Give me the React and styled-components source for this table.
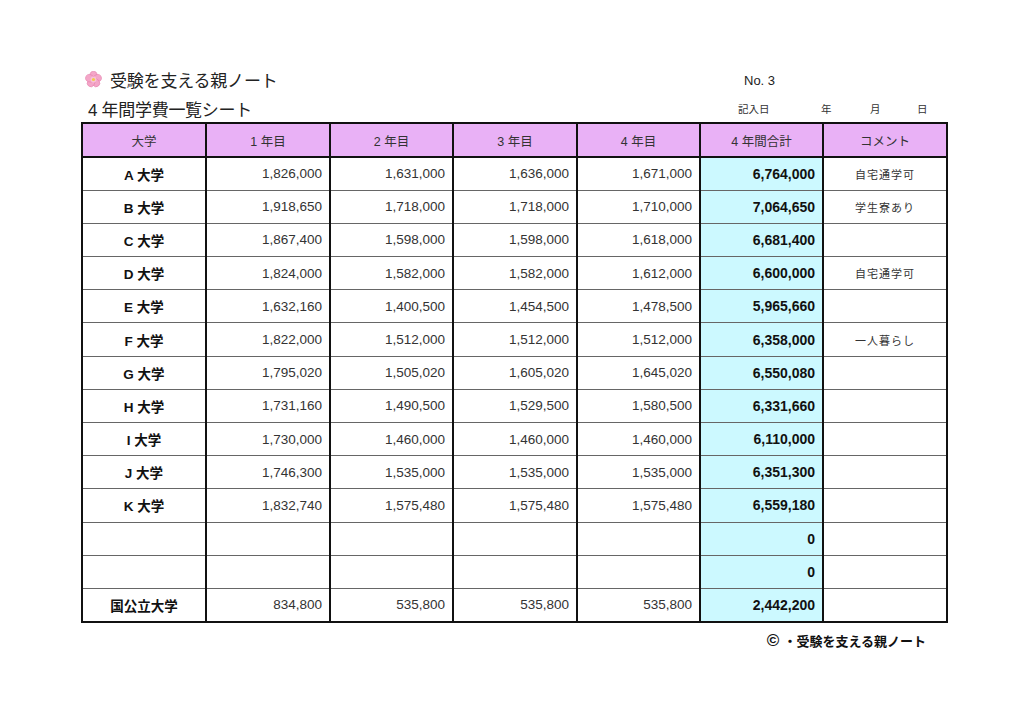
import React from 'react'
import styled, { createGlobalStyle } from 'styled-components'

const GlobalStyle = createGlobalStyle`
  html, body {
    margin: 0;
    padding: 0;
    background: #ffffff;
  }
  body {
    font-family: "Liberation Sans", "Noto Sans CJK JP", sans-serif;
    color: #222;
  }
`

const rows = [
  { name: 'A 大学', y: ['1,826,000', '1,631,000', '1,636,000', '1,671,000'], total: '6,764,000', note: '自宅通学可' },
  { name: 'B 大学', y: ['1,918,650', '1,718,000', '1,718,000', '1,710,000'], total: '7,064,650', note: '学生寮あり' },
  { name: 'C 大学', y: ['1,867,400', '1,598,000', '1,598,000', '1,618,000'], total: '6,681,400', note: '' },
  { name: 'D 大学', y: ['1,824,000', '1,582,000', '1,582,000', '1,612,000'], total: '6,600,000', note: '自宅通学可' },
  { name: 'E 大学', y: ['1,632,160', '1,400,500', '1,454,500', '1,478,500'], total: '5,965,660', note: '' },
  { name: 'F 大学', y: ['1,822,000', '1,512,000', '1,512,000', '1,512,000'], total: '6,358,000', note: '一人暮らし' },
  { name: 'G 大学', y: ['1,795,020', '1,505,020', '1,605,020', '1,645,020'], total: '6,550,080', note: '' },
  { name: 'H 大学', y: ['1,731,160', '1,490,500', '1,529,500', '1,580,500'], total: '6,331,660', note: '' },
  { name: 'I 大学', y: ['1,730,000', '1,460,000', '1,460,000', '1,460,000'], total: '6,110,000', note: '' },
  { name: 'J 大学', y: ['1,746,300', '1,535,000', '1,535,000', '1,535,000'], total: '6,351,300', note: '' },
  { name: 'K 大学', y: ['1,832,740', '1,575,480', '1,575,480', '1,575,480'], total: '6,559,180', note: '' },
  { name: '', y: ['', '', '', ''], total: '0', note: '' },
  { name: '', y: ['', '', '', ''], total: '0', note: '' },
  { name: '国公立大学', y: ['834,800', '535,800', '535,800', '535,800'], total: '2,442,200', note: '' },
]

const headers = ['大学', '1 年目', '2 年目', '3 年目', '4 年目', '4 年間合計', 'コメント']

function Flower() {
  const petals = [0, 72, 144, 216, 288]
  return (
    <svg width="17" height="17" viewBox="0 0 20 20">
      {petals.map((a) => (
        <ellipse key={a} cx="10" cy="5.2" rx="4.3" ry="4.8" fill="#f4a6c8" stroke="#e27aa8" strokeWidth="0.6" transform={`rotate(${a} 10 10)`} />
      ))}
      <circle cx="10" cy="10" r="3.4" fill="#f7c3d9" />
      <circle cx="10" cy="10" r="1.9" fill="#f3c94a" />
    </svg>
  )
}

function App() {
  return (
    <>
      <GlobalStyle />
      <Page>
        <TopBar>
          <Title>
            <Flower />
            受験を支える親ノート
          </Title>
          <SheetNo>No. 3</SheetNo>
        </TopBar>
        <SubBar>
          <SubTitle>4 年間学費一覧シート</SubTitle>
          <DateBlock>
            <span>記入日</span>
            <span>年</span>
            <span>月</span>
            <span>日</span>
          </DateBlock>
        </SubBar>
        <Table>
          <colgroup>
            <col style={{ width: 124 }} />
            <col style={{ width: 124 }} />
            <col style={{ width: 123 }} />
            <col style={{ width: 124 }} />
            <col style={{ width: 123 }} />
            <col style={{ width: 123 }} />
            <col style={{ width: 124 }} />
          </colgroup>
          <thead>
            <tr>
              {headers.map((h) => (
                <Th key={h}>{h}</Th>
              ))}
            </tr>
          </thead>
          <tbody>
            {rows.map((r, i) => (
              <Tr key={i}>
                <NameCell>{r.name}</NameCell>
                {r.y.map((v, j) => (
                  <NumCell key={j}>{v}</NumCell>
                ))}
                <TotalCell>{r.total}</TotalCell>
                <NoteCell>{r.note}</NoteCell>
              </Tr>
            ))}
          </tbody>
        </Table>
        <Footer>
          <Copy>©</Copy>・受験を支える親ノート
        </Footer>
      </Page>
    </>
  )
}

const Page = styled.div`
  width: 866px;
  padding: 64px 0 0 81px;
  display: flex;
  flex-direction: column;
`

const TopBar = styled.div`
  display: flex;
  align-items: center;
  justify-content: space-between;
  height: 30px;
`

const Title = styled.div`
  display: flex;
  align-items: center;
  gap: 8px;
  padding-left: 4px;
  font-family: "Noto Sans CJK JP", sans-serif;
  font-size: 17px;
  color: #222;
  letter-spacing: -0.2px;
`

const SheetNo = styled.div`
  width: 203px;
  font-family: "Liberation Sans", sans-serif;
  font-size: 13px;
  color: #222;
  margin-top: 2px;
`

const SubBar = styled.div`
  display: flex;
  align-items: center;
  justify-content: space-between;
  height: 28px;
`

const SubTitle = styled.div`
  padding-left: 7px;
  font-family: "Liberation Sans", "Noto Sans CJK JP", sans-serif;
  font-size: 17px;
  color: #222;
  letter-spacing: -0.3px;
`

const DateBlock = styled.div`
  display: grid;
  grid-template-columns: 83px 49px 47px 30px;
  width: 209px;
  font-family: "Noto Sans CJK JP", sans-serif;
  font-size: 10.5px;
  color: #333;
`

const Table = styled.table`
  border-collapse: collapse;
  table-layout: fixed;
  width: 866px;
  border: 2px solid #111;
`

const Th = styled.th`
  height: 32px;
  background: #e9b1f6;
  border-left: 2px solid #111;
  border-bottom: 2px solid #111;
  font-family: "Liberation Sans", "Noto Sans CJK JP", sans-serif;
  font-weight: normal;
  font-size: 12.5px;
  color: #333;
  padding: 0;
  text-align: center;
`

const Tr = styled.tr`
  height: 33.2px;
  & > td {
    border-left: 2px solid #111;
    border-top: 1px solid #666;
    padding: 0 7px;
    font-size: 14px;
  }
`

const NameCell = styled.td`
  text-align: center;
  font-weight: bold;
  color: #111;
  font-family: "Liberation Sans", "Noto Sans CJK JP", sans-serif;
  && {
    font-size: 13.5px;
  }
`

const NumCell = styled.td`
  text-align: right;
  color: #333;
  font-family: "Liberation Sans", sans-serif;
  && {
    font-size: 13.5px;
  }
`

const TotalCell = styled.td`
  text-align: right;
  background: #ccf9ff;
  font-weight: bold;
  color: #111;
  font-family: "Liberation Sans", sans-serif;
`

const NoteCell = styled.td`
  text-align: center;
  color: #333;
  font-family: "Noto Sans CJK JP", sans-serif;
  && {
    font-size: 11px;
    letter-spacing: 1px;
  }
`

const Footer = styled.div`
  align-self: flex-end;
  display: flex;
  align-items: center;
  gap: 2px;
  margin: 8px 21px 0 0;
  font-family: "Noto Sans CJK JP", sans-serif;
  font-weight: bold;
  font-size: 13px;
  color: #111;
`

const Copy = styled.span`
  font-family: "Liberation Sans", sans-serif;
  font-size: 17px;
  line-height: 1;
  margin-right: 2px;
`

export default App
